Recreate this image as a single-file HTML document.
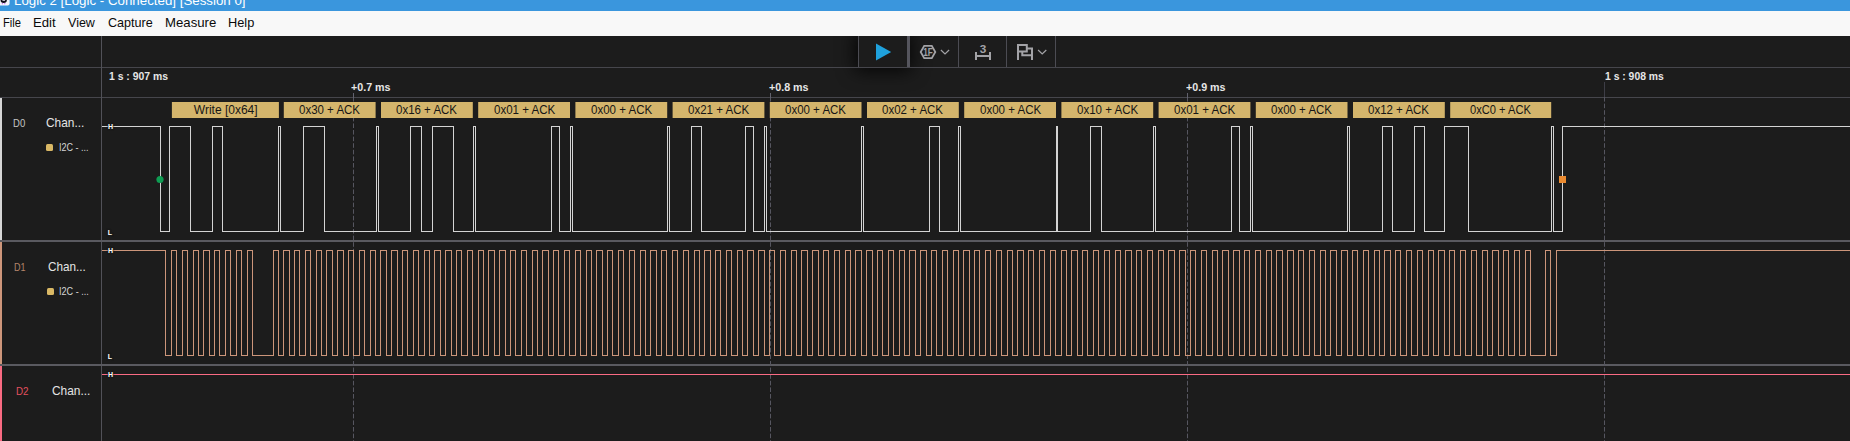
<!DOCTYPE html>
<html lang="en">
<head>
<meta charset="utf-8">
<title>Logic 2 [Logic - Connected] [Session 0]</title>
<style>
html,body{margin:0;padding:0;}
body{width:1850px;height:441px;overflow:hidden;background:#1c1c1c;position:relative;font-family:"Liberation Sans", sans-serif;}
.abs,.t,.bb{position:absolute;}
.t{white-space:pre;display:block;transform-origin:0 0;}
#title{left:0;top:0;width:1850px;height:11px;background:#3a96dd;overflow:hidden;}
#menu{left:0;top:11px;width:1850px;height:25px;background:#f8f8f8;}
#app{left:0;top:36px;width:1850px;height:405px;background:#1c1c1c;}
.hl{left:0;width:1850px;height:1px;background:#46464c;}
.vl{top:36px;width:1px;height:31px;background:#4c4c53;}
.bb{top:102px;height:16px;background:#d9b86c;}
.chip{width:7px;height:7px;border-radius:1.5px;background:#d9b865;}
</style>
</head>
<body>
<div id="title" class="abs"></div>
<div id="menu" class="abs"></div>
<div id="app" class="abs"></div>

<!-- app icon (bottom sliver) -->
<svg class="abs" style="left:0;top:0" width="12" height="8" viewBox="0 0 12 8">
<path d="M0 0H9.6V3.4Q9.6 5.4 7.6 5.4H0Z" fill="#f6f6fb"/>
<path d="M0.6 0H6.8V0.3Q6.8 3 3.7 3Q0.6 3 0.6 0.3Z" fill="#120c18"/>
<rect x="2.4" y="0" width="2.7" height="0.8" fill="#ececf2"/>
<rect x="1.9" y="3.2" width="1" height="1" fill="#c24df0"/>
<rect x="4.2" y="3.2" width="1.1" height="1" fill="#c24df0"/>
</svg>

<!-- toolbar -->
<div class="abs" style="left:0;top:36px;width:1850px;height:80px;overflow:hidden"><div class="abs" style="left:859px;top:0;width:48px;height:31px;background:#1c1c1c;box-shadow:0 0 18px 4px rgba(0,0,0,.8)"></div></div>
<div class="abs vl" style="left:858px"></div>
<div class="abs vl" style="left:907px;width:3px;background:#55555d"></div>
<div class="abs vl" style="left:958px"></div>
<div class="abs vl" style="left:1006px"></div>
<div class="abs vl" style="left:1055px"></div>
<svg class="abs" style="left:858px;top:36px" width="198" height="31" viewBox="858 36 198 31">
<path d="M876 43.5L891.2 52L876 60.6Z" fill="#1fa1dc"/>
<g fill="none" stroke="#a3a3a7" stroke-width="2">
<path d="M924.2 45.9H931.8L935.3 52.05L931.8 58.2H924.2L920.7 52.05Z" stroke-width="1.8"/>
<path d="M940.9 50L945 54L949.1 50" stroke-width="1.2"/>
<path d="M1038.1 50L1042.2 54L1046.3 50" stroke-width="1.2"/>
<path d="M976 52V60M990 52V60M976 56H990"/>
<path d="M1018 60V45.1H1026.8V51.5H1018M1026.8 48.5H1032V60M1022.3 51.5V55.2H1032"/>
</g>
<text x="928" y="55.7" font-family='"Liberation Sans", sans-serif' font-size="10" font-weight="700" fill="#a3a3a7" text-anchor="middle" textLength="9.6" lengthAdjust="spacingAndGlyphs">1F</text>
<text x="983.1" y="53" font-family='"Liberation Sans", sans-serif' font-size="11.8" font-weight="700" fill="#a3a3a7" text-anchor="middle">3</text>
</svg>

<!-- frame lines -->
<div class="abs hl" style="top:67px"></div>
<div class="abs hl" style="top:97px"></div>
<div class="abs" style="left:101px;top:36px;width:1px;height:405px;background:#515158"></div>
<div class="abs" style="left:0;top:240px;width:1850px;height:2px;background:#5a5a60"></div>
<div class="abs" style="left:0;top:364px;width:1850px;height:2px;background:#5a5a60"></div>

<!-- channel colour bars -->
<div class="abs" style="left:0;top:98px;width:2px;height:142px;background:#d6d6d6"></div>
<div class="abs" style="left:0;top:242px;width:2px;height:122px;background:#cd967b"></div>
<div class="abs" style="left:0;top:366px;width:2px;height:75px;background:#f96a82"></div>
<div class="abs chip" style="left:46px;top:144px"></div>
<div class="abs chip" style="left:47px;top:288px"></div>

<!-- grid -->
<svg class="abs" style="left:0;top:0" width="1850" height="441" viewBox="0 0 1850 441">
<g stroke="#565660" stroke-width="1" stroke-dasharray="4.6 2">
<path d="M353.5 97V441"/>
<path d="M770.5 97V441"/>
<path d="M1187.5 97V441"/>
<path d="M1604.5 97V441"/>
</g>
</svg>

<!-- analyzer bubbles -->
<svg class="abs" style="left:0;top:98px" width="1850" height="24" viewBox="0 98 1850 24"><g fill="#d4b56c"><rect x="171.9" y="102" width="107.0" height="16"/><rect x="283.8" y="102" width="91.8" height="16"/><rect x="381.0" y="102" width="91.8" height="16"/><rect x="478.2" y="102" width="91.8" height="16"/><rect x="575.4" y="102" width="91.8" height="16"/><rect x="672.6" y="102" width="91.8" height="16"/><rect x="769.8" y="102" width="91.7" height="16"/><rect x="867.0" y="102" width="91.8" height="16"/><rect x="964.2" y="102" width="91.8" height="16"/><rect x="1061.4" y="102" width="91.8" height="16"/><rect x="1158.6" y="102" width="91.8" height="16"/><rect x="1255.8" y="102" width="91.7" height="16"/><rect x="1353.0" y="102" width="91.8" height="16"/><rect x="1450.2" y="102" width="101.0" height="16"/></g></svg>

<!-- waveforms -->
<svg class="abs" style="left:0;top:0" width="1850" height="441" viewBox="0 0 1850 441">
<g stroke="#62626e" stroke-width="1" shape-rendering="crispEdges">
<path d="M353.5 93V98"/>
<path d="M770.5 93V98"/>
<path d="M1187.5 93V98"/>
<path d="M1604.5 82V97" stroke="#3e3e47"/>
</g>
<path d="M102 126.5H160.5V231.5H169.5V126.5H190.5V231.5H212.5V126.5H222.5V231.5H278.5V126.5H280.5V231.5H303.5V126.5H324.5V231.5H376.5V126.5H378.5V231.5H410.5V126.5H421.5V231.5H432.5V126.5H453.5V231.5H473.5V126.5H475.5V231.5H551.5V126.5H559.5V231.5H570.5V126.5H572.5V231.5H667.5V126.5H669.5V231.5H691.5V126.5H701.5V231.5H745.5V126.5H753.5V231.5H764.5V126.5H766.5V231.5H861.5V126.5H863.5V231.5H929.5V126.5H939.5V231.5H958.5V126.5H960.5V231.5H1056.5V126.5H1057.5V231.5H1090.5V126.5H1101.5V231.5H1153.5V126.5H1155.5V231.5H1231.5V126.5H1239.5V231.5H1250.5V126.5H1252.5V231.5H1347.5V126.5H1349.5V231.5H1382.5V126.5H1392.5V231.5H1414.5V126.5H1424.5V231.5H1444.5V126.5H1468.5V231.5H1551.5V126.5H1553.5V231.5H1562.5V126.5H1850" fill="none" stroke="#d4d4d4" stroke-width="1" shape-rendering="crispEdges"/>
<path d="M102 250.5H165.5V355.5H171.5V250.5H176.5V355.5H182.5V250.5H187.5V355.5H193.5V250.5H198.5V355.5H203.5V250.5H209.5V355.5H214.5V250.5H219.5V355.5H225.5V250.5H230.5V355.5H236.5V250.5H241.5V355.5H247.5V250.5H252.5V355.5H273.5V250.5H278.5V355.5H283.5V250.5H289.5V355.5H294.5V250.5H299.5V355.5H305.5V250.5H310.5V355.5H316.5V250.5H321.5V355.5H326.5V250.5H332.5V355.5H337.5V250.5H343.5V355.5H348.5V250.5H353.5V355.5H359.5V250.5H364.5V355.5H370.5V250.5H375.5V355.5H380.5V250.5H386.5V355.5H391.5V250.5H397.5V355.5H402.5V250.5H407.5V355.5H413.5V250.5H418.5V355.5H424.5V250.5H429.5V355.5H434.5V250.5H440.5V355.5H445.5V250.5H451.5V355.5H456.5V250.5H461.5V355.5H467.5V250.5H472.5V355.5H478.5V250.5H483.5V355.5H488.5V250.5H494.5V355.5H499.5V250.5H505.5V355.5H510.5V250.5H515.5V355.5H521.5V250.5H526.5V355.5H532.5V250.5H537.5V355.5H542.5V250.5H548.5V355.5H553.5V250.5H558.5V355.5H564.5V250.5H569.5V355.5H575.5V250.5H580.5V355.5H586.5V250.5H591.5V355.5H596.5V250.5H602.5V355.5H607.5V250.5H612.5V355.5H618.5V250.5H623.5V355.5H629.5V250.5H634.5V355.5H640.5V250.5H645.5V355.5H650.5V250.5H656.5V355.5H661.5V250.5H666.5V355.5H672.5V250.5H677.5V355.5H683.5V250.5H688.5V355.5H694.5V250.5H699.5V355.5H704.5V250.5H710.5V355.5H715.5V250.5H720.5V355.5H726.5V250.5H731.5V355.5H737.5V250.5H742.5V355.5H747.5V250.5H753.5V355.5H758.5V250.5H764.5V355.5H769.5V250.5H774.5V355.5H780.5V250.5H785.5V355.5H791.5V250.5H796.5V355.5H801.5V250.5H807.5V355.5H812.5V250.5H818.5V355.5H823.5V250.5H828.5V355.5H834.5V250.5H839.5V355.5H845.5V250.5H850.5V355.5H855.5V250.5H861.5V355.5H866.5V250.5H872.5V355.5H877.5V250.5H882.5V355.5H888.5V250.5H893.5V355.5H899.5V250.5H904.5V355.5H909.5V250.5H915.5V355.5H920.5V250.5H926.5V355.5H931.5V250.5H936.5V355.5H942.5V250.5H947.5V355.5H953.5V250.5H958.5V355.5H963.5V250.5H969.5V355.5H974.5V250.5H979.5V355.5H985.5V250.5H990.5V355.5H996.5V250.5H1001.5V355.5H1007.5V250.5H1012.5V355.5H1017.5V250.5H1023.5V355.5H1028.5V250.5H1033.5V355.5H1039.5V250.5H1044.5V355.5H1050.5V250.5H1055.5V355.5H1061.5V250.5H1066.5V355.5H1071.5V250.5H1077.5V355.5H1082.5V250.5H1087.5V355.5H1093.5V250.5H1098.5V355.5H1104.5V250.5H1109.5V355.5H1115.5V250.5H1120.5V355.5H1125.5V250.5H1131.5V355.5H1136.5V250.5H1141.5V355.5H1147.5V250.5H1152.5V355.5H1158.5V250.5H1163.5V355.5H1168.5V250.5H1174.5V355.5H1179.5V250.5H1185.5V355.5H1190.5V250.5H1195.5V355.5H1201.5V250.5H1206.5V355.5H1212.5V250.5H1217.5V355.5H1222.5V250.5H1228.5V355.5H1233.5V250.5H1239.5V355.5H1244.5V250.5H1249.5V355.5H1255.5V250.5H1260.5V355.5H1266.5V250.5H1271.5V355.5H1276.5V250.5H1282.5V355.5H1287.5V250.5H1293.5V355.5H1298.5V250.5H1303.5V355.5H1309.5V250.5H1314.5V355.5H1320.5V250.5H1325.5V355.5H1330.5V250.5H1336.5V355.5H1341.5V250.5H1347.5V355.5H1352.5V250.5H1357.5V355.5H1363.5V250.5H1368.5V355.5H1374.5V250.5H1379.5V355.5H1384.5V250.5H1390.5V355.5H1395.5V250.5H1400.5V355.5H1406.5V250.5H1411.5V355.5H1417.5V250.5H1422.5V355.5H1428.5V250.5H1433.5V355.5H1438.5V250.5H1444.5V355.5H1449.5V250.5H1454.5V355.5H1460.5V250.5H1465.5V355.5H1471.5V250.5H1476.5V355.5H1482.5V250.5H1487.5V355.5H1492.5V250.5H1498.5V355.5H1503.5V250.5H1508.5V355.5H1514.5V250.5H1519.5V355.5H1525.5V250.5H1530.5V355.5H1545.5V250.5H1550.5V355.5H1556.5V250.5H1850" fill="none" stroke="#cc957a" stroke-width="1" shape-rendering="crispEdges"/>
<path d="M102 374.5H1850" fill="none" stroke="#fa6b84" stroke-width="1" shape-rendering="crispEdges"/>
<circle cx="160" cy="179.5" r="3.6" fill="#0f9d53"/>
<rect x="1559" y="176" width="7" height="7" fill="#ea8a30"/>
</svg>

<!-- text -->
<span id="ttl" class="t" style="left:13.50px;top:-5px;font-size:12.5px;line-height:12.5px;font-weight:400;color:#ffffff;transform:scaleX(1.0645);">Logic 2 [Logic - Connected] [Session 0]</span>
<span id="m1" class="t" style="left:3.30px;top:16px;font-size:13.5px;line-height:13.5px;font-weight:400;color:#0a0a0a;transform:scaleX(0.8286);">File</span>
<span id="m2" class="t" style="left:32.90px;top:16px;font-size:13.5px;line-height:13.5px;font-weight:400;color:#0a0a0a;transform:scaleX(0.9749);">Edit</span>
<span id="m3" class="t" style="left:68.30px;top:16px;font-size:13.5px;line-height:13.5px;font-weight:400;color:#0a0a0a;transform:scaleX(0.9277);">View</span>
<span id="m4" class="t" style="left:107.80px;top:16px;font-size:13.5px;line-height:13.5px;font-weight:400;color:#0a0a0a;transform:scaleX(0.9325);">Capture</span>
<span id="m5" class="t" style="left:165.30px;top:16px;font-size:13.5px;line-height:13.5px;font-weight:400;color:#0a0a0a;transform:scaleX(0.9765);">Measure</span>
<span id="m6" class="t" style="left:228.10px;top:16px;font-size:13.5px;line-height:13.5px;font-weight:400;color:#0a0a0a;transform:scaleX(0.9481);">Help</span>
<span id="t0" class="t" style="left:109.25px;top:71px;font-size:11px;line-height:11px;font-weight:700;color:#e6e6e6;transform:scaleX(0.9453);">1 s : 907 ms</span>
<span id="t1" class="t" style="left:351.30px;top:82px;font-size:11px;line-height:11px;font-weight:700;color:#e6e6e6;transform:scaleX(0.9725);">+0.7 ms</span>
<span id="t2" class="t" style="left:768.80px;top:82px;font-size:11px;line-height:11px;font-weight:700;color:#e6e6e6;transform:scaleX(0.9725);">+0.8 ms</span>
<span id="t3" class="t" style="left:1185.80px;top:82px;font-size:11px;line-height:11px;font-weight:700;color:#e6e6e6;transform:scaleX(0.9725);">+0.9 ms</span>
<span id="t4" class="t" style="left:1604.50px;top:71px;font-size:11px;line-height:11px;font-weight:700;color:#e6e6e6;transform:scaleX(0.9421);">1 s : 908 ms</span>
<span id="d0" class="t" style="left:13.10px;top:118px;font-size:10.5px;line-height:10.5px;font-weight:400;color:#c4c4c4;transform:scaleX(0.9077);">D0</span>
<span id="c0" class="t" style="left:46.00px;top:116px;font-size:13px;line-height:13px;font-weight:400;color:#e4e4e4;transform:scaleX(0.9146);">Chan...</span>
<span id="i0" class="t" style="left:58.70px;top:142px;font-size:10.5px;line-height:10.5px;font-weight:400;color:#d4d4d4;transform:scaleX(0.8606);">I2C - ...</span>
<span id="d1" class="t" style="left:13.90px;top:262px;font-size:10.5px;line-height:10.5px;font-weight:400;color:#b4846a;transform:scaleX(0.8615);">D1</span>
<span id="c1" class="t" style="left:48.00px;top:260px;font-size:13px;line-height:13px;font-weight:400;color:#e4e4e4;transform:scaleX(0.9014);">Chan...</span>
<span id="i1" class="t" style="left:59.00px;top:286px;font-size:10.5px;line-height:10.5px;font-weight:400;color:#d4d4d4;transform:scaleX(0.8636);">I2C - ...</span>
<span id="d2" class="t" style="left:15.50px;top:386px;font-size:10.5px;line-height:10.5px;font-weight:400;color:#e2505f;transform:scaleX(0.9385);">D2</span>
<span id="c2" class="t" style="left:52.30px;top:384px;font-size:13px;line-height:13px;font-weight:400;color:#e4e4e4;transform:scaleX(0.9146);">Chan...</span>
<span id="b0" class="t" style="left:193.80px;top:104px;font-size:12px;line-height:12px;font-weight:400;color:#161616;transform:scaleX(1.0000);">Write [0x64]</span>
<span id="b1" class="t" style="left:298.95px;top:104px;font-size:12px;line-height:12px;font-weight:400;color:#161616;transform:scaleX(0.9578);">0x30 + ACK</span>
<span id="b2" class="t" style="left:396.35px;top:104px;font-size:12px;line-height:12px;font-weight:400;color:#161616;transform:scaleX(0.9578);">0x16 + ACK</span>
<span id="b3" class="t" style="left:493.85px;top:104px;font-size:12px;line-height:12px;font-weight:400;color:#161616;transform:scaleX(0.9620);">0x01 + ACK</span>
<span id="b4" class="t" style="left:590.75px;top:104px;font-size:12px;line-height:12px;font-weight:400;color:#161616;transform:scaleX(0.9620);">0x00 + ACK</span>
<span id="b5" class="t" style="left:688.35px;top:104px;font-size:12px;line-height:12px;font-weight:400;color:#161616;transform:scaleX(0.9620);">0x21 + ACK</span>
<span id="b6" class="t" style="left:784.80px;top:104px;font-size:12px;line-height:12px;font-weight:400;color:#161616;transform:scaleX(0.9578);">0x00 + ACK</span>
<span id="b7" class="t" style="left:882.35px;top:104px;font-size:12px;line-height:12px;font-weight:400;color:#161616;transform:scaleX(0.9578);">0x02 + ACK</span>
<span id="b8" class="t" style="left:979.85px;top:104px;font-size:12px;line-height:12px;font-weight:400;color:#161616;transform:scaleX(0.9620);">0x00 + ACK</span>
<span id="b9" class="t" style="left:1076.75px;top:104px;font-size:12px;line-height:12px;font-weight:400;color:#161616;transform:scaleX(0.9620);">0x10 + ACK</span>
<span id="b10" class="t" style="left:1174.35px;top:104px;font-size:12px;line-height:12px;font-weight:400;color:#161616;transform:scaleX(0.9620);">0x01 + ACK</span>
<span id="b11" class="t" style="left:1270.80px;top:104px;font-size:12px;line-height:12px;font-weight:400;color:#161616;transform:scaleX(0.9578);">0x00 + ACK</span>
<span id="b12" class="t" style="left:1368.35px;top:104px;font-size:12px;line-height:12px;font-weight:400;color:#161616;transform:scaleX(0.9578);">0x12 + ACK</span>
<span id="b13" class="t" style="left:1469.95px;top:104px;font-size:12px;line-height:12px;font-weight:400;color:#161616;transform:scaleX(0.9288);">0xC0 + ACK</span>
<span id="h0" class="t" style="left:107.90px;top:123px;font-size:7px;line-height:7px;font-weight:700;color:#ffffff;transform:scaleX(1.0000);text-shadow:0 0 2px #1c1c1c,0 0 2px #1c1c1c,0 0 1px #1c1c1c;">H</span>
<span id="l0" class="t" style="left:107.80px;top:229px;font-size:7px;line-height:7px;font-weight:700;color:#ffffff;transform:scaleX(1.0000);text-shadow:0 0 2px #1c1c1c,0 0 2px #1c1c1c,0 0 1px #1c1c1c;">L</span>
<span id="h1" class="t" style="left:107.90px;top:247px;font-size:7px;line-height:7px;font-weight:700;color:#ffffff;transform:scaleX(1.0000);text-shadow:0 0 2px #1c1c1c,0 0 2px #1c1c1c,0 0 1px #1c1c1c;">H</span>
<span id="l1" class="t" style="left:107.80px;top:353px;font-size:7px;line-height:7px;font-weight:700;color:#ffffff;transform:scaleX(1.0000);text-shadow:0 0 2px #1c1c1c,0 0 2px #1c1c1c,0 0 1px #1c1c1c;">L</span>
<span id="h2" class="t" style="left:107.90px;top:371px;font-size:7px;line-height:7px;font-weight:700;color:#ffffff;transform:scaleX(1.0000);text-shadow:0 0 2px #1c1c1c,0 0 2px #1c1c1c,0 0 1px #1c1c1c;">H</span>
</body>
</html>
